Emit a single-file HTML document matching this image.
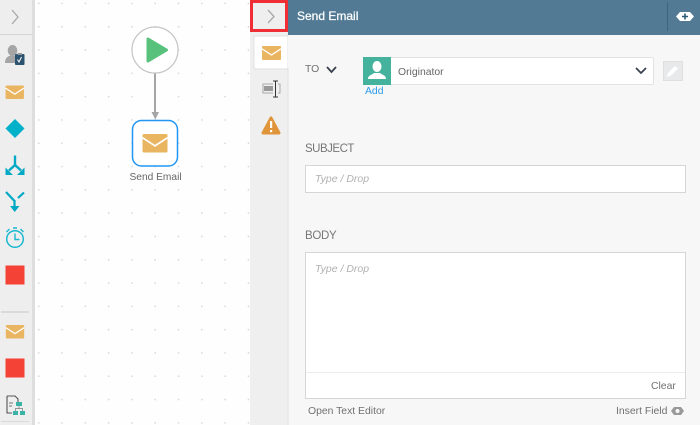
<!DOCTYPE html>
<html><head><meta charset="utf-8"><style>
html,body{margin:0;padding:0}
body{width:700px;height:425px;position:relative;overflow:hidden;background:#fff;font-family:"Liberation Sans",sans-serif;color:#707070;filter:blur(.25px)}
.a{position:absolute}
.t{position:absolute;white-space:nowrap;font-size:10.400px;line-height:14px}
.box{position:absolute;background:#fff;border:1px solid #d6d6d6;box-sizing:border-box}
</style></head><body>
<svg class="a" style="left:0;top:0" width="700" height="425" viewBox="0 0 700 425">
<defs><pattern id="d" x="38" y="26" width="23.3" height="23.3" patternUnits="userSpaceOnUse"><rect width="1.500" height="1.500" fill="#d8d8d8"/></pattern>
<symbol id="env" viewBox="0 0 19 14"><rect width="19" height="14" rx="1" fill="#eab560"/><path d="M0 2.800 9.500 9 19 2.800" fill="none" stroke="#fff" stroke-width="1.300"/></symbol></defs>
<rect x="35" y="0" width="215" height="425" fill="#fefefe"/>
<rect x="35" y="0" width="215" height="425" fill="url(#d)"/>
<rect x="0" y="0" width="33" height="425" fill="#eeeeee"/>
<rect x="32" y="0" width="3" height="425" fill="#dedede"/>
<rect x="0" y="34" width="33" height="1" fill="#d6d6d6"/>
<path d="M12 10 18 17 12 24" fill="none" stroke="#a8a8a8" stroke-width="1.300"/>
<ellipse cx="12.500" cy="50.500" rx="4.800" ry="5.500" fill="#a5a5a5"/><path d="M5 63c0-5.500 3-7.500 7.500-7.500S17 58 17 63z" fill="#a5a5a5"/>
<rect x="15" y="54" width="9.500" height="11" rx="1" fill="#2b526e"/><rect x="17.500" y="53" width="4.500" height="2" fill="#999"/><path d="M17.500 59.500l1.500 2.500 2.500-5" fill="none" stroke="#fff" stroke-width="1"/>
<use href="#env" x="5.500" y="85.500" width="18.500" height="13.500"/>
<path d="M15 119 24.500 128.500 15 138 5.500 128.500z" fill="#00b1c9"/>
<path d="M15 155.500V165M15 165 9 170.500M15 165 21 170.500" fill="none" stroke="#00a9c4" stroke-width="2.400"/><path d="M5.500 167.500v7.500h7.500zM24.500 167.500v7.500h-7.500z" fill="#00a9c4"/>
<path d="M6 192 14.500 201M24 192.500 18 198M14.500 200V207" fill="none" stroke="#00a9c4" stroke-width="2.200"/><path d="M10 206h9.500l-4.800 6z" fill="#00a9c4"/>
<circle cx="15" cy="239" r="8.300" fill="none" stroke="#1cb8d0" stroke-width="1.500"/><path d="M15 233.500v6h4.500M6.500 232l3-3M23.500 232l-3-3M13 228h4" fill="none" stroke="#1cb8d0" stroke-width="1.400"/>
<rect x="5.500" y="265.500" width="19" height="19" fill="#f44336"/>
<rect x="1" y="311" width="28" height="2" fill="#dadada"/>
<use href="#env" x="5.500" y="325" width="19" height="13.500"/>
<rect x="5.500" y="358.500" width="19" height="19" fill="#f44336"/>
<path d="M7 396h8l3 3v3M7 396v17h5" fill="none" stroke="#555" stroke-width="1.100"/><path d="M9 403h4M9 406h3" stroke="#777"/>
<rect x="16" y="402" width="6" height="4" fill="#3bb3a6"/><rect x="13" y="411" width="5" height="4" fill="#3bb3a6"/><rect x="20" y="411" width="5" height="4" fill="#3bb3a6"/><path d="M15.500 411V408.500H22.500V411M19 406V408.500" fill="none" stroke="#777" stroke-width=".7"/>
<rect x="1" y="421" width="28" height="1" fill="#dadada"/>
<path d="M155 73V115" stroke="#a5a5a5" stroke-width="2"/><path d="M151.500 112h7.500l-3.700 7.500z" fill="#a5a5a5"/>
<circle cx="155" cy="50" r="23" fill="#fff" stroke="#c4c4c4" stroke-width="1.200"/>
<path d="M148 39 166.500 50 148 61z" fill="#58c27d" stroke="#58c27d" stroke-width="3" stroke-linejoin="round"/>
<rect x="132.500" y="120.500" width="45" height="45.500" rx="9" fill="#fff" stroke="#2196f3" stroke-width="1.500"/>
<use href="#env" x="142.500" y="134" width="25" height="18.500"/>
<rect x="250" y="0" width="450" height="425" fill="#f7f7f7"/>
<rect x="250" y="0" width="38" height="425" fill="#efefef"/><rect x="287.500" y="34" width="1" height="391" fill="#e0e0e0"/>
<rect x="288" y="0" width="412" height="35" fill="#527a94"/>
<rect x="251.500" y="1.500" width="35" height="29" fill="#efefef" stroke="#ef2f35" stroke-width="3"/>
<path d="M268 10 274 16.500 268 23" fill="none" stroke="#a8a8a8" stroke-width="1.300"/>
<path d="M254 36H288V69H256Q254 69 254 67z" fill="#fff" stroke="#e0e0e0"/>
<rect x="288" y="35" width="1" height="33" fill="#f7f7f7"/>
<use href="#env" x="262" y="46" width="19" height="14"/>
<path d="M273 84h-10v9h10M278 84h2v9h-2" fill="none" stroke="#aaa"/><rect x="264" y="86" width="9" height="5" fill="#999"/><path d="M275.500 81V97M273 81h5M273 97h5" stroke="#333" fill="none"/>
<path d="M271 118 279 133H263z" fill="#e0953a" stroke="#e0953a" stroke-width="3" stroke-linejoin="round"/><rect x="270" y="121" width="2.200" height="7" fill="#fff"/><rect x="270" y="130" width="2.200" height="2.200" fill="#fff"/>
<path d="M327 67 331.500 72 336 67" fill="none" stroke="#3a4250" stroke-width="1.800"/>
<rect x="667" y="2" width="1" height="29" fill="#3d6580"/>
<path d="M680 12h10l4 4.500-4 4.500H680l-4-4.500z" fill="#fff"/><path d="M685 13.500v6M682 16.500h6" stroke="#2b5a78" stroke-width="1.600"/>
<rect x="663.500" y="61.500" width="19" height="19" fill="#e8e9ea" stroke="#dfdfdf"/>
<path d="M667 77l1-4 7-7 3 2.500-7 7z" fill="#fff"/>
</svg>
<div class="t" style="left:297px;top:9px;color:#fff;font-size:12px;-webkit-text-stroke:.25px #fff">Send Email</div>
<div class="t" style="left:129.500px;top:171px;font-size:10.200px;color:#666">Send Email</div>
<div class="t" style="left:305px;top:63px">TO</div>
<div class="box" style="left:363px;top:57px;width:291px;height:28px;border-color:#e2e2e2;border-radius:2px"></div>
<div class="a" style="left:363px;top:57px;width:28px;height:28px;background:#45b29d"></div>
<svg class="a" style="left:363px;top:57px" width="28" height="28"><ellipse cx="14" cy="9.500" rx="4.500" ry="5.500" fill="#fff"/><path d="M5 22c0-4 4-4 6-6h6c2 2 6 2 6 6z" fill="#fff"/></svg>
<div class="t" style="left:398px;top:66px;color:#666">Originator</div>
<svg class="a" style="left:634px;top:66px" width="14" height="10"><path d="M2 2 7 7 12 2" fill="none" stroke="#3a4250" stroke-width="1.800"/></svg>
<div class="t" style="left:365px;top:85px;color:#2b9ce8">Add</div>
<div class="t" style="left:305px;top:142px;font-size:11.500px;letter-spacing:-.5px;color:#777">SUBJECT</div>
<div class="box" style="left:305px;top:165px;width:381px;height:28px"></div>
<div class="t" style="left:315px;top:172px;font-size:10.500px;font-style:italic;color:#b0b0b0">Type / Drop</div>
<div class="t" style="left:305px;top:229px;font-size:11.500px;letter-spacing:-.3px;color:#777">BODY</div>
<div class="box" style="left:305px;top:252px;width:381px;height:147px"></div>
<div class="a" style="left:306px;top:372px;width:379px;height:1px;background:#ececec"></div>
<div class="t" style="left:315px;top:262px;font-size:10.500px;font-style:italic;color:#b0b0b0">Type / Drop</div>
<div class="t" style="left:651px;top:380px">Clear</div>
<div class="t" style="left:308px;top:405px">Open Text Editor</div>
<div class="t" style="left:616px;top:405px">Insert Field</div>
<svg class="a" style="left:671px;top:406px" width="14" height="10"><path d="M3 1h7l3 4-3 4H3L0 5z" fill="#999"/><circle cx="6.500" cy="5" r="2" fill="#f7f7f7"/></svg>
</body></html>
